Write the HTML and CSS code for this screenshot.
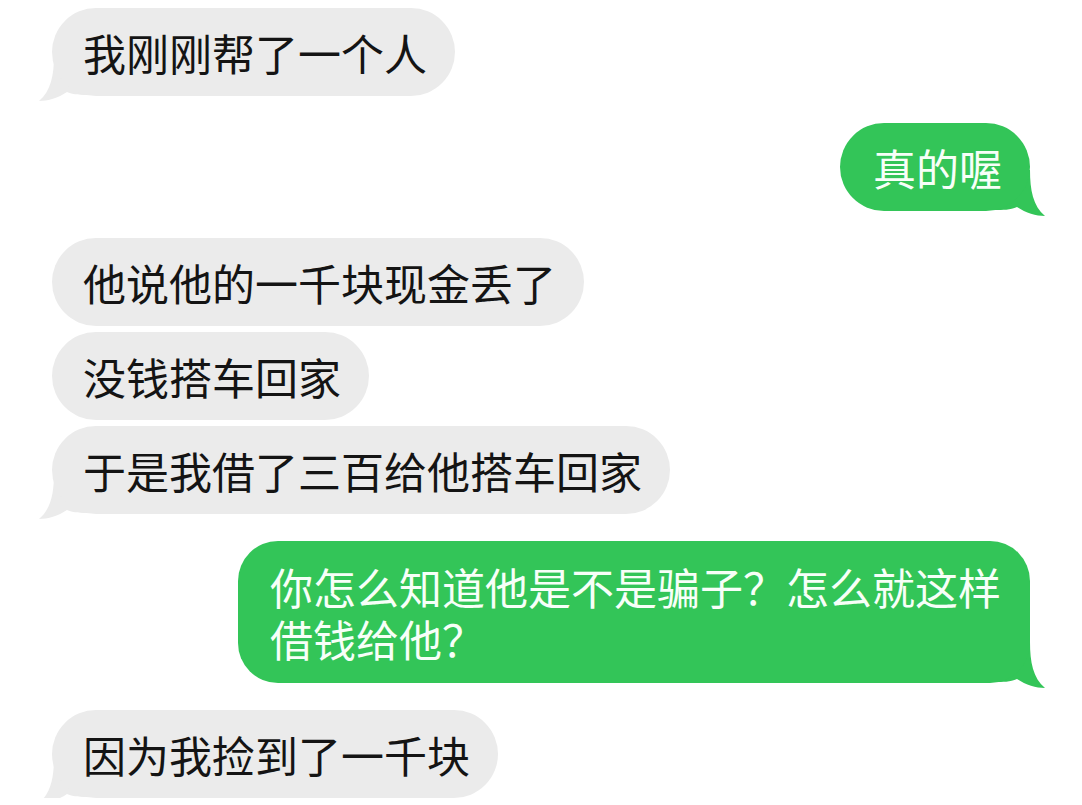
FILE: index.html
```html
<!DOCTYPE html>
<html lang="zh-CN">

<head>
    <meta charset="UTF-8">
    <meta name="viewport" content="width=device-width, initial-scale=1.0">
    <title>聊天记录</title>
    <link rel="stylesheet" href="styles.css">
</head>

<body>
    <div class="chat">
        <!-- 对方 -->
        <div class="group">
            <div class="bubble in">我刚刚帮了一个人
                <svg class="tail" viewBox="0 0 50 46"><path d="M0 0H35C35 20 38 36 50 46C41 46 31 43 22 37C15 40 8 40 0 40Z"/></svg>
            </div>
        </div>

        <!-- 自己 -->
        <div class="group">
            <div class="bubble out">真的喔
                <svg class="tail" viewBox="0 0 50 46"><path d="M0 0H35C35 20 38 36 50 46C41 46 31 43 22 37C15 40 8 40 0 40Z"/></svg>
            </div>
        </div>

        <div class="group">
            <div class="bubble in">他说他的一千块现金丢了</div>
            <div class="bubble in">没钱搭车回家</div>
            <div class="bubble in">于是我借了三百给他搭车回家
                <svg class="tail" viewBox="0 0 50 46"><path d="M0 0H35C35 20 38 36 50 46C41 46 31 43 22 37C15 40 8 40 0 40Z"/></svg>
            </div>
        </div>

        <div class="group">
            <div class="bubble out wide">你怎么知道他是不是骗子？怎么就这样借钱给他？
                <svg class="tail" viewBox="0 0 50 46"><path d="M0 0H35C35 20 38 36 50 46C41 46 31 43 22 37C15 40 8 40 0 40Z"/></svg>
            </div>
        </div>

        <div class="group">
            <div class="bubble in">因为我捡到了一千块
                <svg class="tail" viewBox="0 0 50 46"><path d="M0 0H35C35 20 38 36 50 46C41 46 31 43 22 37C15 40 8 40 0 40Z"/></svg>
            </div>
        </div>
    </div>
</body>

</html>
```

FILE: styles.css
```css
* {
    margin: 0;
    padding: 0;
    box-sizing: border-box;
}

body {
    background: #ffffff;
    font-family: "Noto Sans CJK SC", "Noto Sans", sans-serif;
}

.chat {
    display: flex;
    flex-direction: column;
    gap: 27px;
    padding: 8px 52px 0 52px;
}

.group {
    display: flex;
    flex-direction: column;
    gap: 6px;
}

.bubble {
    position: relative;
    max-width: 792px;
    padding: 18px 28px 18px 31px;
    font-size: 43px;
    line-height: 52px;
    border-radius: 44px;
}

.in {
    align-self: flex-start;
    background: #ebebeb;
    color: #141414;
}

.out {
    align-self: flex-end;
    background: #33c558;
    color: #f7fff8;
    padding-left: 33px;
    padding-right: 28px;
}

.wide {
    padding: 19px 27px 19px 32px;
    border-radius: 40px;
}

/* 气泡的小尾巴 */
.tail {
    position: absolute;
    bottom: -5px;
    width: 50px;
    height: 46px;
    z-index: -1;
}

.tail path {
    fill: currentColor;
}

.in .tail {
    left: -13px;
    color: #ebebeb;
    transform: scaleX(-1);
}

.out .tail {
    right: -15px;
    color: #33c558;
}
```
